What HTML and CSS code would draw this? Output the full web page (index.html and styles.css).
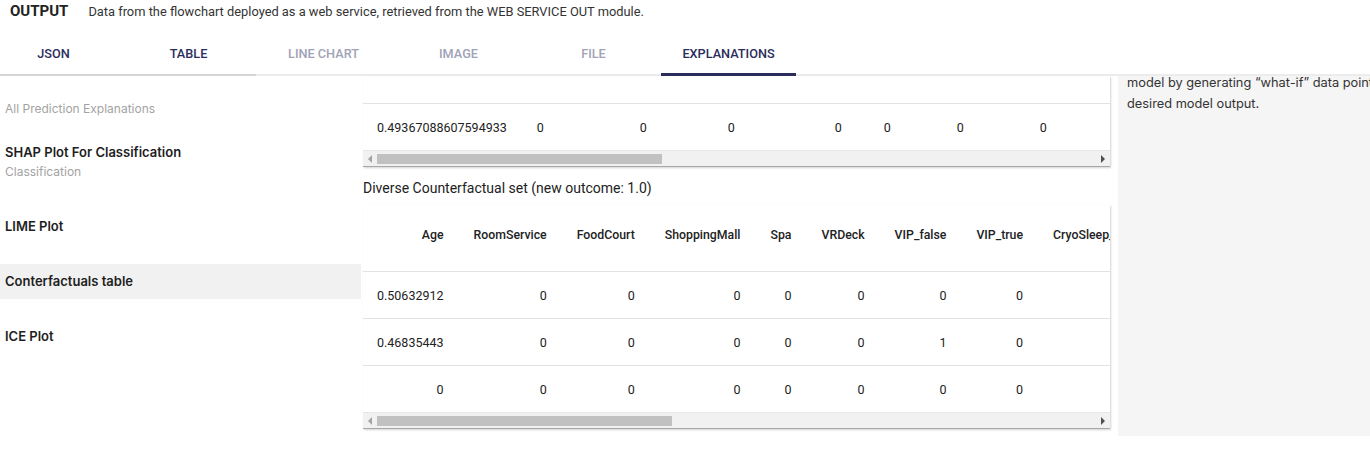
FILE: index.html
```html
<!DOCTYPE html>
<html lang="en">
<head>
  <meta charset="UTF-8" />
  <title>Output - Explanations</title>
  <link rel="stylesheet" href="styles.css">
</head>
<body>
  <div class="header">
    <span class="header-title">OUTPUT</span>
    <span class="header-desc">Data from the flowchart deployed as a web service, retrieved from the WEB SERVICE OUT module.</span>
  </div>

  <div class="tabs">
    <div class="tab tab-seen">JSON</div>
    <div class="tab tab-seen">TABLE</div>
    <div class="tab tab-off">LINE CHART</div>
    <div class="tab tab-off">IMAGE</div>
    <div class="tab tab-off">FILE</div>
    <div class="tab tab-active">EXPLANATIONS</div>
  </div>

  <div class="content">
    <!-- Explanation list -->
    <div class="sidebar">
      <div class="sidebar-heading">All Prediction Explanations</div>
      <div class="side-item side-item-sub">
        <div class="side-title">SHAP Plot For Classification</div>
        <div class="side-sub">Classification</div>
      </div>
      <div class="side-item">
        <div class="side-title">LIME Plot</div>
      </div>
      <div class="side-item selected">
        <div class="side-title">Conterfactuals table</div>
      </div>
      <div class="side-item">
        <div class="side-title">ICE Plot</div>
      </div>
    </div>

    <!-- Counterfactual tables -->
    <div class="main">
      <div class="table-box">
        <div class="table-scroll">
          <table class="data query">
            <tr class="hidden-head"><td></td><td></td><td></td><td></td><td></td><td></td><td></td><td></td><td></td></tr>
            <tr>
              <td>0.49367088607594933</td><td>0</td><td>0</td><td>0</td><td>0</td><td>0</td><td>0</td><td>0</td><td>0</td>
            </tr>
          </table>
        </div>
        <div class="hscroll">
          <span class="arrow arrow-left"></span>
          <div class="track"><div class="thumb thumb-query"></div></div>
          <span class="arrow arrow-right"></span>
        </div>
      </div>

      <div class="set-title">Diverse Counterfactual set (new outcome: 1.0)</div>

      <div class="table-box">
        <div class="table-scroll">
          <table class="data cf">
            <tr>
              <th>Age</th><th>RoomService</th><th>FoodCourt</th><th>ShoppingMall</th><th>Spa</th>
              <th>VRDeck</th><th>VIP_false</th><th>VIP_true</th><th>CryoSleep_false</th><th>CryoSleep_true</th>
            </tr>
            <tr>
              <td>0.50632912</td><td>0</td><td>0</td><td>0</td><td>0</td><td>0</td><td>0</td><td>0</td><td></td><td></td>
            </tr>
            <tr>
              <td>0.46835443</td><td>0</td><td>0</td><td>0</td><td>0</td><td>0</td><td>1</td><td>0</td><td></td><td></td>
            </tr>
            <tr>
              <td>0</td><td>0</td><td>0</td><td>0</td><td>0</td><td>0</td><td>0</td><td>0</td><td></td><td></td>
            </tr>
          </table>
        </div>
        <div class="hscroll">
          <span class="arrow arrow-left"></span>
          <div class="track"><div class="thumb thumb-cf"></div></div>
          <span class="arrow arrow-right"></span>
        </div>
      </div>
    </div>

    <!-- Description panel -->
    <div class="info">
      <p>model by generating “what-if” data points that lead to the<br>desired model output.</p>
    </div>
  </div>
</body>
</html>
```

FILE: styles.css
```css
/* Page */
body {
  margin: 0;
  background: #fff;
  font-family: Roboto, "Liberation Sans", sans-serif;
  color: #222;
  overflow: hidden;
  width: 1370px;
  height: 451px;
}

/* Header */
.header {
  display: flex;
  align-items: center;
  gap: 20px;
  height: 22px;
  padding: 0 10px;
  white-space: nowrap;
}
.header-title {
  font-size: 15px;
  font-weight: 700;
  color: #222;
}
.header-desc {
  font-size: 12.85px;
  color: #333;
}

/* Tabs */
.tabs {
  display: flex;
  margin-top: 10px;
  border-bottom: 2px solid #ececec;
}
.tabs .tab:first-child {
  margin-left: -14px;
}
.tab {
  width: 135px;
  height: 42px;
  line-height: 44px;
  text-align: center;
  font-size: 12.7px;
  font-weight: 500;
  margin-bottom: -2px;
  border-bottom: 2px solid transparent;
}
.tab-seen {
  color: #2b2d5c;
  border-bottom-color: #d5d5d5;
}
.tab-off {
  color: #a0a2b6;
}
.tab-active {
  color: #2b2d5c;
  height: 41px;
  border-bottom: 3px solid #2b2d5c;
}

/* Layout below tabs */
.content {
  display: flex;
  align-items: flex-start;
}

/* Sidebar */
.sidebar {
  width: 361px;
  flex-shrink: 0;
  padding-top: 25px;
  font-family: Inter, "Noto Sans", sans-serif;
}
.sidebar-heading {
  font-size: 12px;
  line-height: 15px;
  color: #a3a3a3;
  padding: 0 5px;
  margin-bottom: 18px;
}
.side-item {
  padding: 10px 5px;
  margin-bottom: 20px;
}
.side-item-sub {
  padding-top: 11px;
  padding-bottom: 9px;
}
.side-item.selected {
  background: #f1f1f1;
}
.side-title {
  font-size: 13px;
  font-weight: 600;
  line-height: 15px;
  color: #1e1e1e;
}
.side-sub {
  font-size: 12px;
  line-height: 16px;
  padding-top: 4px;
  color: #a3a3a3;
}

/* Main column */
.main {
  width: 747px;
  flex-shrink: 0;
  margin-left: 2px;
}
.table-box {
  box-shadow: 1px 1px 2px rgba(0, 0, 0, 0.18);
}
.table-scroll {
  overflow: hidden;
}
.data {
  width: max-content;
  border-collapse: collapse;
  white-space: nowrap;
  font-size: 12.5px;
}
.data td, .data th {
  padding: 0 15px;
  text-align: right;
  border-bottom: 1px solid #e2e2e2;
}
.data th {
  font-size: 12.3px;
  font-weight: 500;
  height: 16px;
  line-height: 16px;
  padding-top: 22px;
  padding-bottom: 28px;
  vertical-align: top;
}
.data td {
  height: 46px;
  color: #222;
}
.data tr:last-child td {
  border-bottom: none;
}
.data td:first-child, .data th:first-child {
  padding-left: 14px;
}

/* query row column widths (its header is scrolled out of view) */
.query .hidden-head td {
  height: 27px;
}
.query td:first-child { text-align: left; }
.query td:nth-child(2) { width: 7px; }
.query td:nth-child(3) { width: 73px; }
.query td:nth-child(4) { width: 58px; }
.query td:nth-child(5) { width: 77px; }
.query td:nth-child(6) { width: 19px; }
.query td:nth-child(7) { width: 43px; }
.query td:nth-child(8) { width: 53px; }
.query td:nth-child(9) { width: 70px; }

.set-title {
  font-size: 14px;
  line-height: 20px;
  padding: 11px 0 7px;
  color: #222;
}

/* Fake horizontal scrollbar */
.hscroll {
  display: flex;
  align-items: center;
  height: 15px;
  background: #f1f1f1;
  border-top: 1px solid #e6e6e6;
  border-bottom: 1px solid #a8a8a8;
}
.track {
  flex: 1;
}
.thumb {
  height: 10px;
  background: #c1c1c1;
}
.thumb-query {
  width: 285px;
}
.thumb-cf {
  width: 295px;
}
.arrow {
  width: 14px;
  display: flex;
  justify-content: center;
}
.arrow::before {
  content: "";
  border-top: 4px solid transparent;
  border-bottom: 4px solid transparent;
}
.arrow-left::before {
  border-right: 4px solid #a3a3a3;
}
.arrow-right::before {
  border-left: 4px solid #505050;
}

/* Right description panel */
.info {
  width: 300px;
  flex-shrink: 0;
  height: 360px;
  margin-left: 8px;
  background: #f5f5f5;
  overflow: hidden;
  font-family: Inter, "Noto Sans", sans-serif;
}
.info p {
  margin: -4px 0 0;
  padding-left: 9px;
  font-size: 12.8px;
  line-height: 21px;
  color: #333;
  white-space: nowrap;
}
```
